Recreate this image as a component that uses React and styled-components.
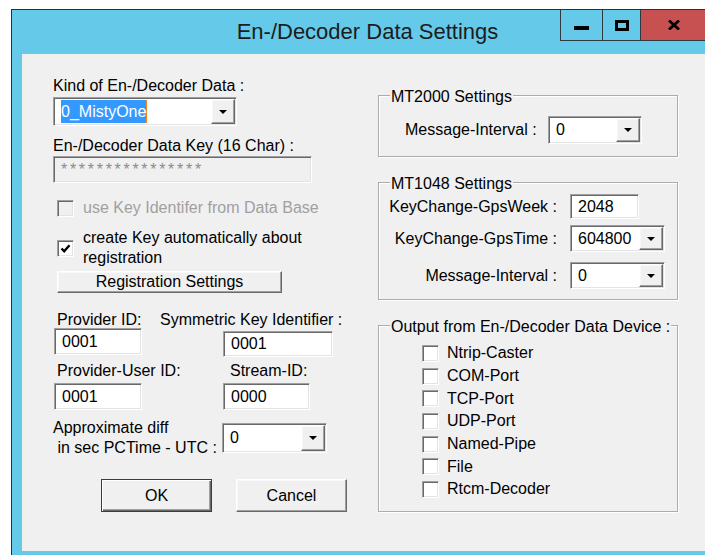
import styled, { createGlobalStyle } from "styled-components";

const GlobalStyle = createGlobalStyle`
  html, body {
    margin: 0;
    padding: 0;
    background: #ffffff;
    overflow: hidden;
  }
  body {
    width: 705px;
    height: 555px;
    font-family: "Liberation Sans", Arial, sans-serif;
    font-size: 16px;
    color: #000;
  }
`;

/* classic 3D edges */
const sunken = `
  border: 1px solid;
  border-color: #a0a0a0 #ffffff #ffffff #a0a0a0;
  box-shadow: inset 1px 1px 0 #696969, inset -1px -1px 0 #e3e3e3;
`;

const raised = `
  border: 1px solid;
  border-color: #ffffff #696969 #696969 #ffffff;
  box-shadow: inset -1px -1px 0 #a0a0a0, inset 1px 1px 0 #f8f8f8;
`;

const Window = styled.div`
  margin: 9px 0 0 11px;
  width: 712px;
  height: 560px;
  box-sizing: border-box;
  border-top: 1px solid #2e2e2e;
  border-left: 1px solid #2e2e2e;
  background: #65c9ea;
`;

const TitleBar = styled.div`
  height: 44px;
  display: grid;
  grid-template-columns: 1fr auto 1fr;
  align-items: start;
`;

const Title = styled.div`
  padding-top: 10px;
  line-height: 24px;
  font-size: 22px;
  color: #1c1c1c;
  white-space: nowrap;
`;

const Controls = styled.div`
  justify-self: end;
  margin-right: 17px;
  display: flex;
`;

const CtrlButton = styled.div`
  width: ${(p) => p.$w}px;
  height: 31px;
  box-sizing: border-box;
  border-left: 1px solid #2e3a40;
  border-bottom: 1px solid #2e3a40;
  background: ${(p) => (p.$close ? "#c75050" : "transparent")};
  display: flex;
  align-items: center;
  justify-content: center;
  padding-top: ${(p) => p.$pt || 0}px;
`;

const MinGlyph = styled.span`
  width: 15px;
  height: 4px;
  background: #000;
`;

const MaxGlyph = styled.span`
  width: 14px;
  height: 11px;
  box-sizing: border-box;
  border: 3px solid #000;
`;

const Client = styled.div`
  margin-left: 10px;
  height: 497px;
  background: #f0f0f0;
  display: flex;
  padding-left: 31px;
`;

const LeftCol = styled.div`
  width: 325px;
  flex-shrink: 0;
  display: flex;
  flex-direction: column;
`;

const RightCol = styled.div`
  width: 300px;
  flex-shrink: 0;
  display: flex;
  flex-direction: column;
`;

const Caption = styled.div`
  flex-shrink: 0;
  width: ${(p) => (p.$w ? `${p.$w}px` : "auto")};
  margin: ${(p) => p.$mt || 0}px 0 0 ${(p) => p.$ml || 0}px;
  line-height: ${(p) => p.$lh || 20}px;
  text-align: ${(p) => (p.$right ? "right" : "left")};
  color: ${(p) => (p.$disabled ? "#a0a0a0" : "#000")};
  white-space: pre;
`;

const Row = styled.div`
  display: flex;
  align-items: ${(p) => p.$align || "center"};
  margin: ${(p) => p.$mt || 0}px 0 0 ${(p) => p.$ml || 0}px;
  height: ${(p) => (p.$h ? `${p.$h}px` : "auto")};
`;

const TextBox = styled.div`
  flex-shrink: 0;
  box-sizing: border-box;
  width: ${(p) => p.$w}px;
  height: ${(p) => p.$h}px;
  margin: ${(p) => p.$mt || 0}px 0 0 ${(p) => p.$ml || 0}px;
  ${sunken}
  background: ${(p) => (p.$disabled ? "#f0f0f0" : "#ffffff")};
  color: ${(p) => (p.$disabled ? "#8c8c8c" : "#000")};
  letter-spacing: ${(p) => (p.$disabled ? "2.7px" : "0")};
  padding-left: 7px;
  display: flex;
  align-items: center;
`;

const Combo = styled.div`
  flex-shrink: 0;
  box-sizing: border-box;
  width: ${(p) => p.$w}px;
  height: ${(p) => p.$h}px;
  margin: ${(p) => p.$mt || 0}px 0 0 ${(p) => p.$ml || 0}px;
  ${sunken}
  background: #ffffff;
  display: flex;
  padding: 1px;
`;

const ComboValue = styled.div`
  flex: 1;
  display: flex;
  align-items: center;
  padding-left: 6px;
`;

const Selected = styled.span`
  background: #3399ff;
  color: #ffffff;
  line-height: 23px;
`;

const Caret = styled.span`
  width: 1px;
  height: 23px;
  background: #f08a24;
`;

const DropButton = styled.div`
  width: 24px;
  box-sizing: border-box;
  background: #f0f0f0;
  ${raised}
  display: flex;
  align-items: center;
  justify-content: center;
`;

const PushButton = styled.div`
  flex-shrink: 0;
  box-sizing: border-box;
  width: ${(p) => p.$w}px;
  height: ${(p) => p.$h}px;
  margin: ${(p) => p.$mt || 0}px 0 0 ${(p) => p.$ml || 0}px;
  background: #f0f0f0;
  display: flex;
  align-items: center;
  justify-content: center;
  ${(p) =>
    p.$default
      ? `
    border: 1px solid #3c3c3c;
    box-shadow: inset 1px 1px 0 #ffffff, inset -1px -1px 0 #696969, inset -2px -2px 0 #a0a0a0;
  `
      : raised}
`;

const CheckRow = styled.div`
  display: flex;
  align-items: center;
  margin: ${(p) => p.$mt || 0}px 0 0 ${(p) => p.$ml || 0}px;
  height: ${(p) => (p.$h ? `${p.$h}px` : "auto")};
  gap: ${(p) => p.$gap || 9}px;
`;

const Box = styled.span`
  flex-shrink: 0;
  width: 17px;
  height: 17px;
  box-sizing: border-box;
  ${sunken}
  background: ${(p) => (p.$disabled ? "#f0f0f0" : "#ffffff")};
  display: flex;
  align-items: center;
  justify-content: center;
`;

const CheckText = styled.span`
  line-height: 20px;
  width: ${(p) => (p.$w ? `${p.$w}px` : "auto")};
  color: ${(p) => (p.$disabled ? "#a0a0a0" : "#000")};
`;

const Group = styled.div`
  margin-top: ${(p) => p.$mt}px;
  border: 1px solid #acacac;
  box-shadow: inset 1px 1px 0 #ffffff, 1px 1px 0 #ffffff;
  padding-bottom: ${(p) => p.$pb}px;
  display: flex;
  flex-direction: column;
`;

const Legend = styled.div`
  align-self: flex-start;
  margin: -8px 0 0 11px;
  padding: 0 1px;
  background: #f0f0f0;
  line-height: 18px;
`;

const Arrow = () => (
  <svg width="8" height="4" viewBox="0 0 8 4">
    <polygon points="0,0 8,0 4,4" fill="#000" />
  </svg>
);

const CheckMark = () => (
  <svg width="11" height="11" viewBox="0 0 11 11">
    <polyline points="1.5,5.5 4.2,8.3 9.5,2.2" fill="none" stroke="#000" strokeWidth="2.4" />
  </svg>
);

const CloseGlyph = () => (
  <svg width="12" height="10" viewBox="0 0 12 10">
    <path d="M1 0.5 L11 9.5 M11 0.5 L1 9.5" stroke="#000" strokeWidth="2.8" />
  </svg>
);

function Dropdown({ w, h, mt, ml, children }) {
  return (
    <Combo $w={w} $h={h} $mt={mt} $ml={ml}>
      <ComboValue>{children}</ComboValue>
      <DropButton>
        <Arrow />
      </DropButton>
    </Combo>
  );
}

function CheckBox({ checked, disabled }) {
  return <Box $disabled={disabled}>{checked ? <CheckMark /> : null}</Box>;
}

const outputs = [
  "Ntrip-Caster",
  "COM-Port",
  "TCP-Port",
  "UDP-Port",
  "Named-Pipe",
  "File",
  "Rtcm-Decoder",
];

export default function App() {
  return (
    <>
      <GlobalStyle />
      <Window>
        <TitleBar>
          <span />
          <Title>En-/Decoder Data Settings</Title>
          <Controls>
            <CtrlButton $w={42} $pt={6}>
              <MinGlyph />
            </CtrlButton>
            <CtrlButton $w={38}>
              <MaxGlyph />
            </CtrlButton>
            <CtrlButton $w={66} $close>
              <CloseGlyph />
            </CtrlButton>
          </Controls>
        </TitleBar>

        <Client>
          <LeftCol>
            <Caption $mt={22}>Kind of En-/Decoder Data :</Caption>
            <Dropdown w={184} h={29} mt={1}>
              <Selected>0_MistyOne</Selected>
              <Caret />
            </Dropdown>

            <Caption $mt={10}>En-/Decoder Data Key (16 Char) :</Caption>
            <TextBox $w={259} $h={27} $disabled>
              ****************
            </TextBox>

            <CheckRow $mt={15} $ml={4}>
              <CheckBox disabled />
              <CheckText $disabled>use Key Identifer from Data Base</CheckText>
            </CheckRow>
            <CheckRow $mt={10} $ml={4}>
              <CheckBox checked />
              <CheckText $w={228}>create Key automatically about registration</CheckText>
            </CheckRow>
            <PushButton $w={225} $h={22} $mt={3} $ml={4}>
              Registration Settings
            </PushButton>

            <Row $mt={18}>
              <Caption $w={103} $ml={4} $lh={18}>
                Provider ID:
              </Caption>
              <Caption $lh={18}>Symmetric Key Identifier :</Caption>
            </Row>
            <Row $mt={-1} $align="flex-start">
              <TextBox $w={88} $h={27} $ml={1}>
                0001
              </TextBox>
              <TextBox $w={110} $h={26} $ml={81} $mt={3}>
                0001
              </TextBox>
            </Row>

            <Row $mt={5}>
              <Caption $w={173} $ml={4} $lh={18}>
                Provider-User ID:
              </Caption>
              <Caption $lh={18}>Stream-ID:</Caption>
            </Row>
            <Row $mt={3} $align="flex-start">
              <TextBox $w={88} $h={27} $ml={1}>
                0001
              </TextBox>
              <TextBox $w={87} $h={27} $ml={81}>
                0000
              </TextBox>
            </Row>

            <Row $mt={8}>
              <Caption $w={169}>{"Approximate diff\n in sec PCTime - UTC :"}</Caption>
              <Dropdown w={105} h={30}>
                0
              </Dropdown>
            </Row>

            <Row $mt={21}>
              <PushButton $w={111} $h={33} $ml={48} $default>
                OK
              </PushButton>
              <PushButton $w={111} $h={33} $ml={24}>
                Cancel
              </PushButton>
            </Row>
          </LeftCol>

          <RightCol>
            <Group $mt={41} $pb={12}>
              <Legend>MT2000 Settings</Legend>
              <Row $mt={10}>
                <Caption $w={143} $ml={26}>
                  Message-Interval :
                </Caption>
                <Dropdown w={94} h={28}>
                  0
                </Dropdown>
              </Row>
            </Group>

            <Group $mt={25} $pb={10}>
              <Legend>MT1048 Settings</Legend>
              <Row $mt={1}>
                <Caption $w={178} $right>
                  KeyChange-GpsWeek :
                </Caption>
                <TextBox $w={69} $h={25} $ml={13}>
                  2048
                </TextBox>
              </Row>
              <Row $mt={6}>
                <Caption $w={178} $right>
                  KeyChange-GpsTime :
                </Caption>
                <Dropdown w={95} h={27} ml={13}>
                  604800
                </Dropdown>
              </Row>
              <Row $mt={10}>
                <Caption $w={178} $right>
                  Message-Interval :
                </Caption>
                <Dropdown w={95} h={27} ml={13}>
                  0
                </Dropdown>
              </Row>
            </Group>

            <Group $mt={25} $pb={10}>
              <Legend>Output from En-/Decoder Data Device :</Legend>
              <Row $mt={6} />
              {outputs.map((name) => (
                <CheckRow key={name} $ml={43} $h={22.7} $gap={8}>
                  <CheckBox />
                  <CheckText>{name}</CheckText>
                </CheckRow>
              ))}
            </Group>
          </RightCol>
        </Client>
      </Window>
    </>
  );
}
